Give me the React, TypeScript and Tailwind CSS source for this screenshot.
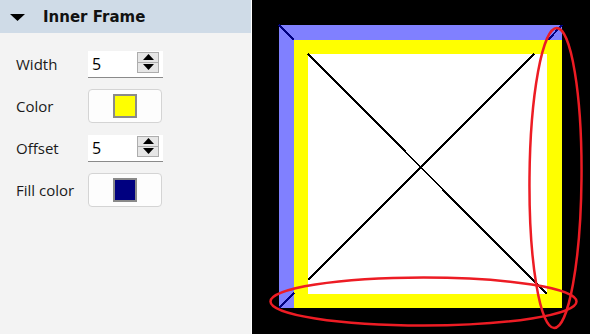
import React from "react"

const labelFont = { fontFamily: '"Open Sans", "Liberation Sans", sans-serif' }

function SpinBox({ value }: { value: string }) {
  return (
    <div className="flex h-[27px] w-[75px] items-start border-b border-[#8a8a8a] bg-white">
      <div className="flex h-[26px] flex-1 items-center pl-[4px] text-[16px] text-black">{value}</div>
      <div className="mr-[4px] mt-[1px] flex h-[21px] w-[22px] flex-col border border-[#adadad] bg-[#e6e6e6]">
        <button className="flex flex-1 items-center justify-center border-b border-[#adadad]">
          <svg width="11" height="6" viewBox="0 0 11 6">
            <path d="M0 6 L5.5 0 L11 6 Z" fill="#000" />
          </svg>
        </button>
        <button className="flex flex-1 items-center justify-center">
          <svg width="11" height="6" viewBox="0 0 11 6">
            <path d="M0 0 L11 0 L5.5 6 Z" fill="#000" />
          </svg>
        </button>
      </div>
    </div>
  )
}

function ColorButton({ color }: { color: string }) {
  return (
    <button className="flex h-[34px] w-[74px] items-center justify-center rounded-[4px] border border-[#d4d4d4] bg-[#fdfdfd]">
      <span className="block h-[24px] w-[24px] border-2 border-[#8a8a8a]" style={{ backgroundColor: color }} />
    </button>
  )
}

function Row({ label, children }: { label: string; children: React.ReactNode }) {
  return (
    <div className="flex h-[34px] items-center">
      <span className="w-[72px] text-[15px] text-[#1a1a1a]">{label}</span>
      {children}
    </div>
  )
}

function Canvas() {
  return (
    <div className="flex-1 bg-black">
      <svg width="338" height="334" viewBox="0 0 338 334" shapeRendering="crispEdges">
        <rect x="27" y="25" width="283" height="283" fill="#8080ff" />
        <rect x="42" y="40" width="268" height="268" fill="#ffff00" />
        <rect x="56" y="54" width="239" height="240" fill="#ffffff" />
        <line x1="27" y1="25" x2="42" y2="40" stroke="#000080" strokeWidth="2" />
        <line x1="310" y1="25" x2="296" y2="40" stroke="#000080" strokeWidth="2" />
        <line x1="27" y1="308" x2="42" y2="293" stroke="#000080" strokeWidth="2" />
        <line x1="56" y1="54" x2="295" y2="294" stroke="#000" strokeWidth="2" />
        <line x1="282" y1="54" x2="56" y2="280" stroke="#000" strokeWidth="2" />
        <g shapeRendering="geometricPrecision" fill="none" stroke="#ed1c24" strokeWidth="2.5">
          <ellipse cx="171.5" cy="301.5" rx="153" ry="24" />
          <ellipse cx="303.5" cy="178" rx="26" ry="150" transform="rotate(0.5 303.5 178)" />
        </g>
      </svg>
    </div>
  )
}

export default function App() {
  return (
    <div className="flex h-[334px] w-[590px] overflow-hidden" style={labelFont}>
      <div className="flex w-[252px] flex-col border-r border-white bg-[#f3f3f3]">
        <div className="flex h-[33px] items-center bg-[#cfdbe7] pl-[10px] pt-[2px]">
          <svg width="15" height="8" viewBox="0 0 15 8">
            <path d="M0 0 L15 0 L7.5 7 Z" fill="#000" />
          </svg>
          <span
            className="ml-[18px] text-[15px] font-bold text-[#111]"
            style={{ fontFamily: '"DejaVu Sans", "Liberation Sans", sans-serif' }}
          >
            Inner Frame
          </span>
        </div>
        <div className="flex flex-col gap-[8px] pl-[16px] pt-[14px]">
          <Row label="Width">
            <SpinBox value="5" />
          </Row>
          <Row label="Color">
            <ColorButton color="#ffff00" />
          </Row>
          <Row label="Offset">
            <SpinBox value="5" />
          </Row>
          <Row label="Fill color">
            <ColorButton color="#000080" />
          </Row>
        </div>
      </div>
      <Canvas />
    </div>
  )
}
